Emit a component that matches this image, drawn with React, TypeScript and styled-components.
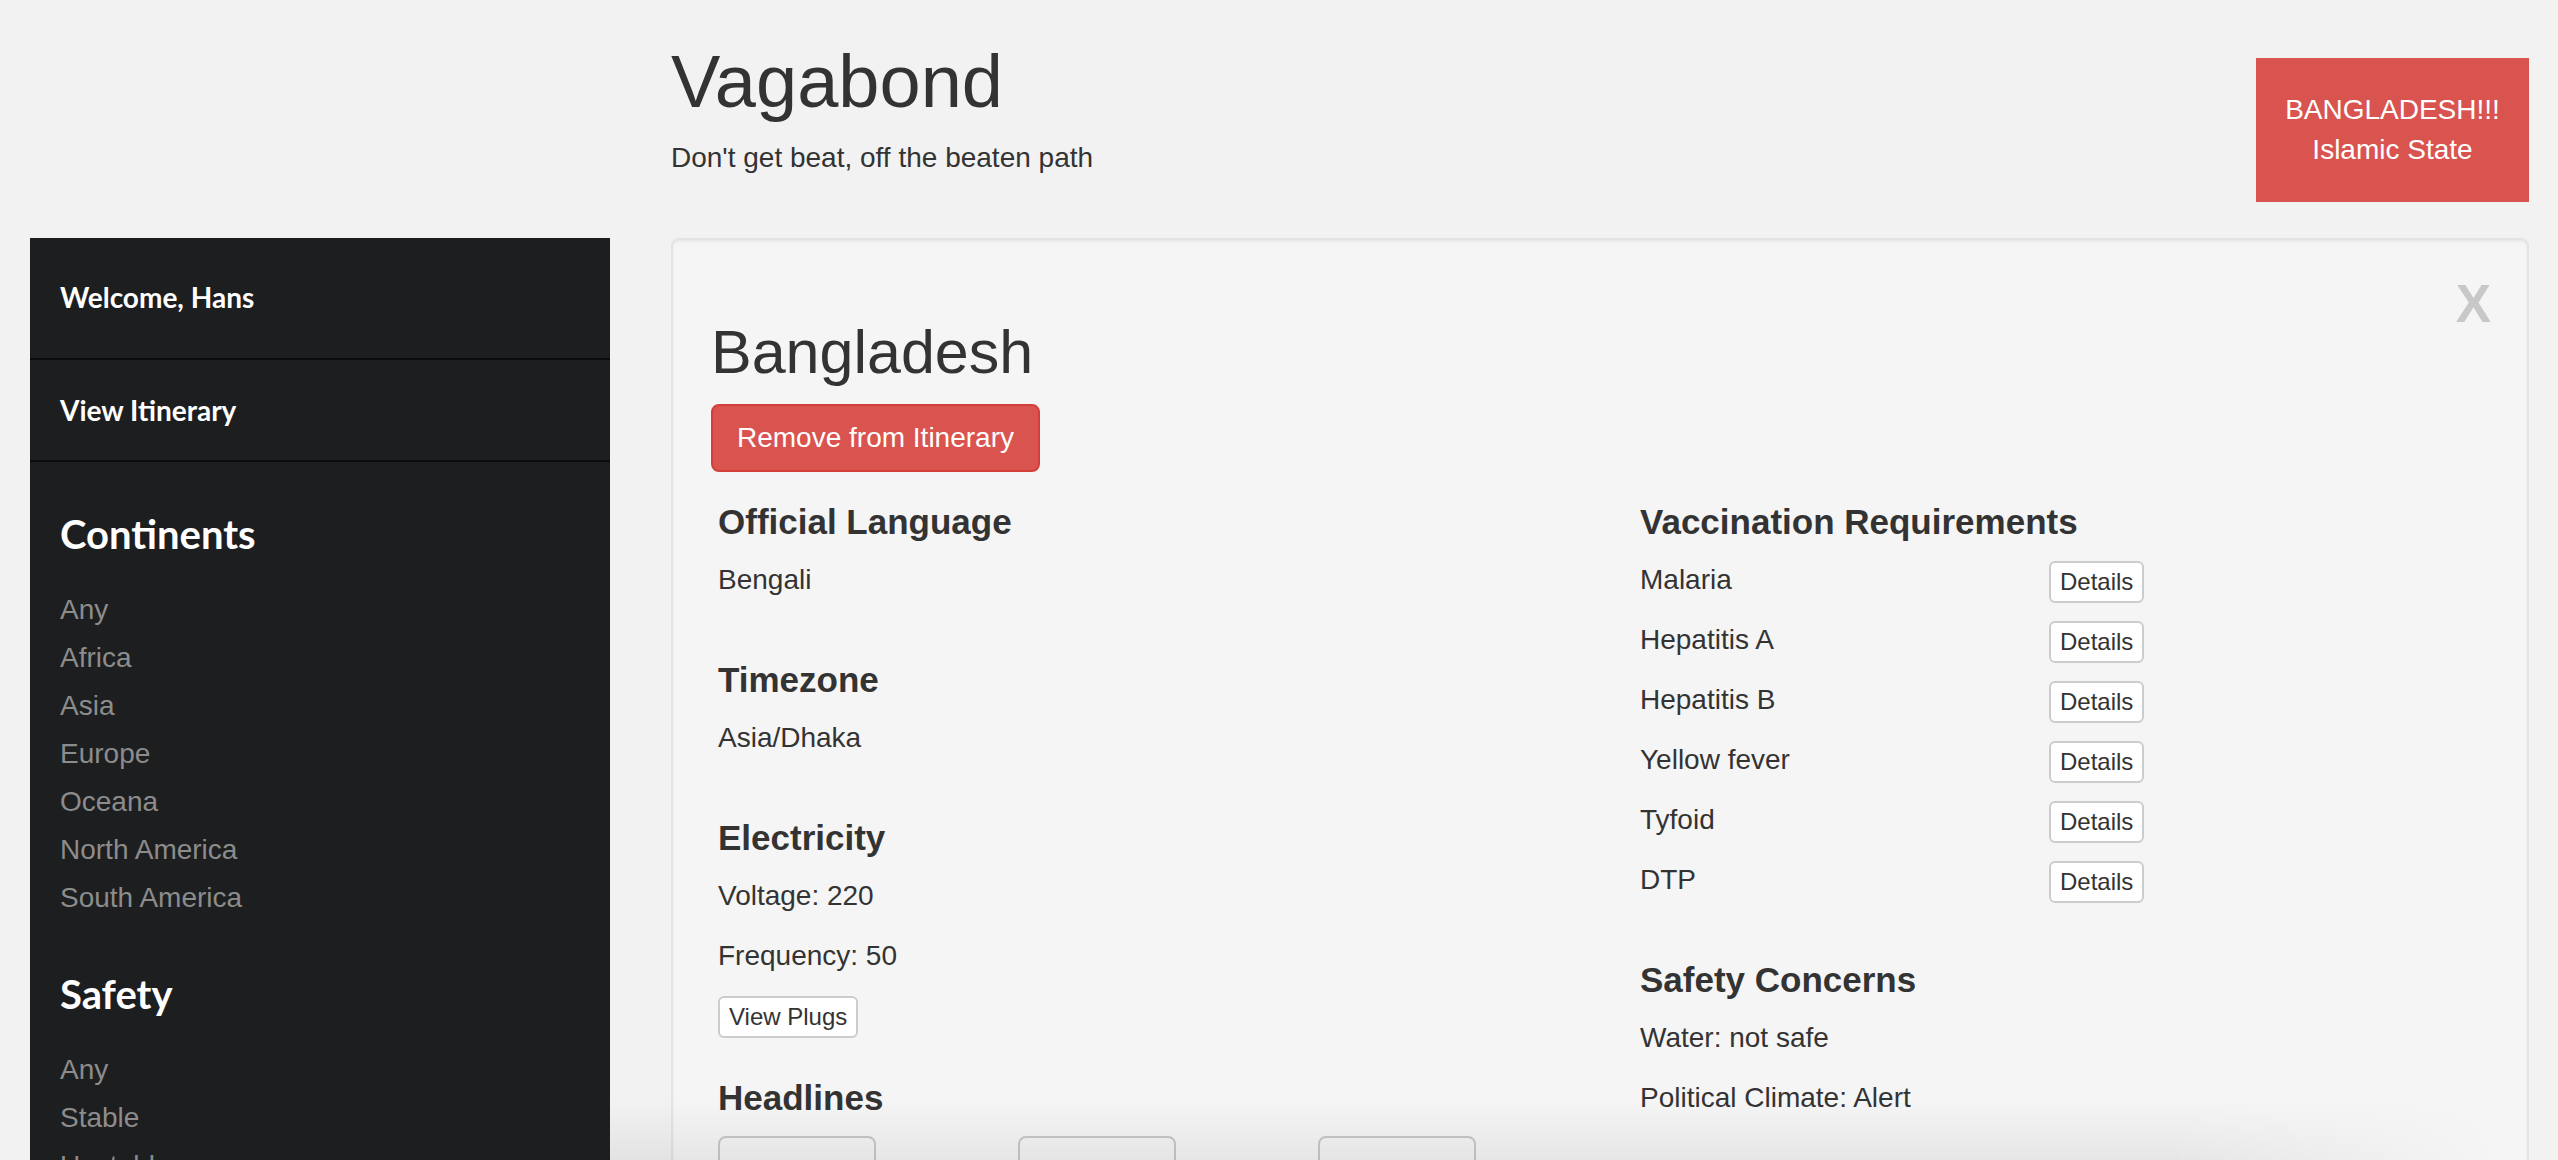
import React from "react"
import styled, { createGlobalStyle } from "styled-components"

const GlobalStyle = createGlobalStyle`
  html, body {
    margin: 0;
    padding: 0;
    background: #f2f2f2;
  }
  body {
    font-family: "Liberation Sans", Arial, sans-serif;
    color: #333;
    font-size: 28px;
    line-height: 40px;
  }
  * {
    box-sizing: border-box;
  }
`

const continents = [
  "Any",
  "Africa",
  "Asia",
  "Europe",
  "Oceana",
  "North America",
  "South America",
]
const safety = ["Any", "Stable", "Unstable", "Dangerous"]
const vaccines = [
  "Malaria",
  "Hepatitis A",
  "Hepatitis B",
  "Yellow fever",
  "Tyfoid",
  "DTP",
]

export default function App() {
  return (
    <Page>
      <GlobalStyle />
      <Header>
        <div />
        <HeaderMain>
          <TitleBlock>
            <SiteTitle>Vagabond</SiteTitle>
            <Tagline>Don't get beat, off the beaten path</Tagline>
          </TitleBlock>
          <Alert>
            <span>BANGLADESH!!!</span>
            <span>Islamic State</span>
          </Alert>
        </HeaderMain>
      </Header>

      <Layout>
        <Sidebar>
          <NavItem first>Welcome, Hans</NavItem>
          <NavItem>View Itinerary</NavItem>
          <FilterSection>
            <FilterTitle>Continents</FilterTitle>
            {continents.map(c => (
              <FilterLink key={c}>{c}</FilterLink>
            ))}
          </FilterSection>
          <FilterSection>
            <FilterTitle>Safety</FilterTitle>
            {safety.map(c => (
              <FilterLink key={c}>{c}</FilterLink>
            ))}
          </FilterSection>
        </Sidebar>

        <Card>
          <CardTop>
            <CountryBlock>
              <CountryName>Bangladesh</CountryName>
              <DangerButton>Remove from Itinerary</DangerButton>
            </CountryBlock>
            <Close>X</Close>
          </CardTop>

          <InfoGrid>
            <div>
              <Section>
                <SectionTitle>Official Language</SectionTitle>
                <Text>Bengali</Text>
              </Section>
              <Section>
                <SectionTitle>Timezone</SectionTitle>
                <Text>Asia/Dhaka</Text>
              </Section>
              <Section>
                <SectionTitle>Electricity</SectionTitle>
                <Text>Voltage: 220</Text>
                <Text>Frequency: 50</Text>
                <SmallButton>View Plugs</SmallButton>
              </Section>
              <Section>
                <SectionTitle>Headlines</SectionTitle>
                <Headlines>
                  <HeadlineCard />
                  <HeadlineCard />
                  <HeadlineCard />
                </Headlines>
              </Section>
            </div>
            <div>
              <Section>
                <SectionTitle>Vaccination Requirements</SectionTitle>
                {vaccines.map(v => (
                  <VaccineRow key={v}>
                    <span>{v}</span>
                    <SmallButton>Details</SmallButton>
                  </VaccineRow>
                ))}
              </Section>
              <Section>
                <SectionTitle>Safety Concerns</SectionTitle>
                <Text>Water: not safe</Text>
                <Text>Political Climate: Alert</Text>
              </Section>
            </div>
          </InfoGrid>
        </Card>
      </Layout>
      <BottomShade />
    </Page>
  )
}

const Page = styled.div`
  padding: 0 29px 0 30px;
`

const Header = styled.header`
  display: grid;
  grid-template-columns: 580px 1fr;
  column-gap: 61px;
  height: 238px;
`

const HeaderMain = styled.div`
  display: flex;
  justify-content: space-between;
  align-items: flex-start;
`

const TitleBlock = styled.div`
  padding-top: 41px;
`

const SiteTitle = styled.h1`
  margin: 0;
  font-size: 74px;
  line-height: 81px;
  font-weight: 400;
  color: #333;
`

const Tagline = styled.p`
  margin: 16px 0 0;
  font-size: 28px;
  line-height: 40px;
`

const Alert = styled.div`
  margin-top: 58px;
  width: 273px;
  height: 144px;
  background: #d9534f;
  color: #fff;
  display: flex;
  flex-direction: column;
  align-items: center;
  justify-content: center;
  font-size: 28px;
  line-height: 40px;
`

const Layout = styled.div`
  display: grid;
  grid-template-columns: 580px 1fr;
  column-gap: 61px;
  align-items: start;
`

const Sidebar = styled.nav`
  background: #1d1e20;
  min-height: 1100px;
  padding-bottom: 60px;
`

const NavItem = styled.div<{ first?: boolean }>`
  padding: ${({ first }) => (first ? "39px 30px 41px" : "30px")};
  border-bottom: 2px solid #0b0b0c;
  font-family: Lato, "Liberation Sans", sans-serif;
  font-weight: 700;
  font-size: 28px;
  line-height: 40px;
  color: #fff;
`

const FilterSection = styled.div`
  padding: 50px 30px 0;
`

const FilterTitle = styled.h3`
  margin: 0 0 30px;
  font-family: Lato, "Liberation Sans", sans-serif;
  font-weight: 700;
  font-size: 40px;
  line-height: 44px;
  color: #fff;
`

const FilterLink = styled.div`
  font-size: 28px;
  line-height: 48px;
  color: #8c8c8c;
`

const Card = styled.section`
  background: #f5f5f5;
  border: 2px solid #e3e3e3;
  border-radius: 8px;
  box-shadow: inset 0 2px 2px rgba(0, 0, 0, 0.05);
  padding: 36px 36px 80px 38px;
  min-height: 1100px;
`

const CardTop = styled.div`
  display: flex;
  justify-content: space-between;
  align-items: flex-start;
`

const CountryBlock = styled.div`
  padding-top: 43px;
`

const CountryName = styled.h2`
  margin: 0;
  font-size: 61px;
  line-height: 66px;
  font-weight: 400;
  color: #333;
`

const DangerButton = styled.button`
  margin-top: 19px;
  display: inline-block;
  font-family: "Liberation Sans", Arial, sans-serif;
  font-size: 28px;
  line-height: 40px;
  padding: 12px 24px;
  color: #fff;
  background: #d9534f;
  border: 2px solid #d43f3a;
  border-radius: 8px;
`

const Close = styled.div`
  margin-top: 1px;
  font-size: 53px;
  line-height: 53px;
  font-weight: 700;
  color: #c8c8c8;
`

const InfoGrid = styled.div`
  margin: 30px 0 0 7px;
  display: grid;
  grid-template-columns: 922px 1fr;
`

const Section = styled.div`
  display: flow-root;
  & + & {
    margin-top: 40px;
  }
`

const SectionTitle = styled.h4`
  margin: 0 0 19px;
  font-size: 35px;
  line-height: 39px;
  font-weight: 700;
  color: #333;
`

const Text = styled.p`
  margin: 0 0 20px;
  font-size: 28px;
  line-height: 40px;
`

const SmallButton = styled.button`
  display: inline-block;
  font-family: "Liberation Sans", Arial, sans-serif;
  font-size: 24px;
  line-height: 36px;
  padding: 1px 9px;
  color: #333;
  background: #fff;
  border: 2px solid #ccc;
  border-radius: 6px;
`

const VaccineRow = styled.div`
  display: grid;
  grid-template-columns: 409px auto;
  align-items: start;
  height: 40px;
  margin-bottom: 20px;
  font-size: 28px;
  line-height: 40px;
  ${SmallButton} {
    justify-self: start;
    margin-top: 1px;
  }
`

const Headlines = styled.div`
  display: grid;
  grid-template-columns: repeat(3, 158px);
  column-gap: 142px;
`

const HeadlineCard = styled.div`
  height: 220px;
  background: #f4f4f4;
  border: 2px solid #c8c8c8;
  border-radius: 8px;
`

const BottomShade = styled.div`
  position: fixed;
  left: 610px;
  right: 0;
  bottom: 0;
  height: 60px;
  pointer-events: none;
  background: linear-gradient(to bottom, rgba(0, 0, 0, 0), rgba(0, 0, 0, 0.06));
  -webkit-mask-image: linear-gradient(to right, #000 80%, transparent 97%);
  mask-image: linear-gradient(to right, #000 80%, transparent 97%);
`
